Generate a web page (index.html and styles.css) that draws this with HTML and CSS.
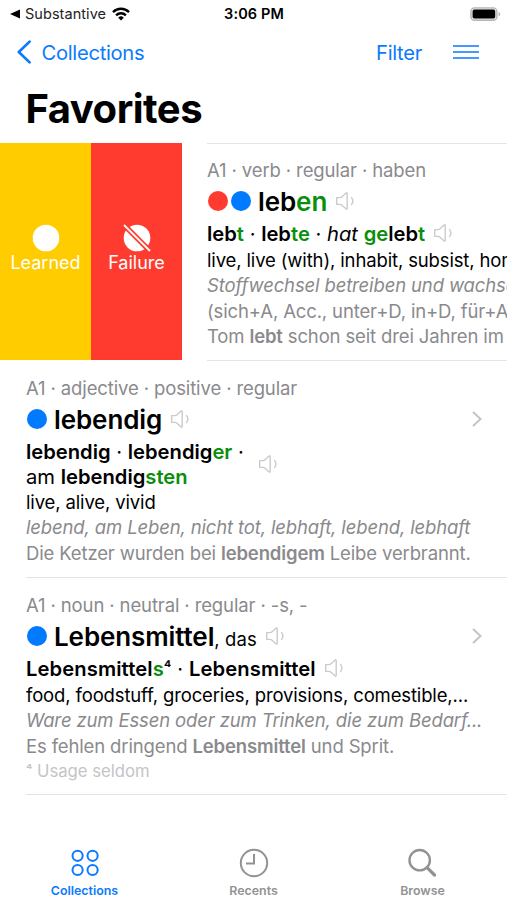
FILE: index.html
```html
<!DOCTYPE html>
<html lang="en">
  <head>
    <meta charset="UTF-8" />
    <meta name="viewport" content="width=device-width, initial-scale=1.0" />
    <title>Favorites</title>
    <link rel="stylesheet" href="styles.css">
  </head>
  <body>
    <!-- shared icons -->
    <svg width="0" height="0" class="defs">
      <symbol id="speaker" viewBox="0 0 20 20">
        <path d="M1.7 6.6h3.6q.8 0 1.4-.6l4.2-3.8q1.3-1 1.3.5v14.6q0 1.5-1.3.5l-4.2-3.8q-.6-.6-1.4-.6H1.7z M16.6 6.6c1.7 2.2 1.7 4.6 0 6.8" fill="none" stroke="#cbcbcd" stroke-width="1.4" stroke-linejoin="round" stroke-linecap="round" />
      </symbol>
      <symbol id="chevron" viewBox="0 0 10 16">
        <path d="M1 1l7.6 7L1 15" fill="none" stroke="#c4c4c7" stroke-width="2" />
      </symbol>
    </svg>
    <div class="app">
      <div class="status">
        <div class="status-left">
          <svg width="10" height="10" viewBox="0 0 10 10"><path d="M10 .6v8.8L0 5z" /></svg>
          <span class="back-app">Substantive</span>
          <svg class="wifi" width="18" height="14" viewBox="0 0 18 14">
            <path d="M1 5.1a11.4 11.4 0 0 1 16 0M4.1 8.3a7 7 0 0 1 9.8 0" fill="none" stroke="#000" stroke-width="2.4" />
            <path d="M9 13.4L6.2 10.7a4 4 0 0 1 5.6 0z" />
          </svg>
        </div>
        <span class="time">3:06 PM</span>
        <svg class="battery" width="31" height="14" viewBox="0 0 31 14">
          <rect x=".9" y=".9" width="26" height="12.4" rx="3.6" fill="#e4e4e4" stroke="#b5b5b5" stroke-width="1.4" />
          <rect x="2.6" y="2.6" width="22.6" height="9" rx="1.8" />
          <path d="M28.6 4.8c2.2.9 2.2 3.7 0 4.6z" fill="#b5b5b5" />
        </svg>
      </div>
      <div class="nav">
        <svg width="14" height="24" viewBox="0 0 14 24"><path d="M12.6 1.6L1.8 12l10.8 10.4" fill="none" stroke="#0a7aff" stroke-width="2.7" stroke-linecap="round" stroke-linejoin="round" /></svg>
        <span class="nav-back">Collections</span>
        <span class="nav-filter">Filter</span>
        <svg width="26" height="16" viewBox="0 0 26 16"><path d="M0 2h26M0 8h26M0 14h26" stroke="#0a7aff" stroke-width="1.6" /></svg>
      </div>
      <h1>Favorites</h1>

      <div class="list">
        <div class="row swiped">
          <div class="action learned">
            <svg width="28" height="28" viewBox="0 0 28 28"><circle cx="14" cy="14" r="13.3" fill="#fff" /></svg>
            <span>Learned</span>
          </div>
          <div class="action failure">
            <svg width="28" height="28" viewBox="0 0 28 28">
              <circle cx="14" cy="14" r="13.3" fill="#fff" />
              <path d="M1 1l26 26" stroke="#ff3b30" stroke-width="5.4" />
              <path d="M1 1l26 26" stroke="#fff" stroke-width="1.8" />
            </svg>
            <span>Failure</span>
          </div>
          <div class="entry">
            <div class="meta">A1 · verb · regular · haben</div>
            <div class="head">
              <i class="dot red"></i><i class="dot"></i>
              <span class="word">leb<em>en</em></span>
              <svg class="speaker"><use href="#speaker" /></svg>
            </div>
            <div class="forms">
              <span><b>leb<em>t</em></b> · <b>leb<em>te</em></b> · <i>hat</i> <b><em>ge</em>leb<em>t</em></b></span>
              <svg class="speaker"><use href="#speaker" /></svg>
            </div>
            <div class="line">live, live (with), inhabit, subsist, hom</div>
            <div class="line gray italic">Stoffwechsel betreiben und wachse</div>
            <div class="line gray">(sich+A, Acc., unter+D, in+D, für+A</div>
            <div class="line gray">Tom <b>lebt</b> schon seit drei Jahren im</div>
          </div>
        </div>

        <div class="row">
          <div class="entry">
            <div class="meta">A1 · adjective · positive · regular</div>
            <div class="head">
              <i class="dot"></i>
              <span class="word">lebendig</span>
              <svg class="speaker"><use href="#speaker" /></svg>
              <svg class="chevron"><use href="#chevron" /></svg>
            </div>
            <div class="forms two">
              <span><b>lebendig</b> · <b>lebendig<em>er</em></b> ·<br>am <b>lebendig<em>sten</em></b></span>
              <svg class="speaker"><use href="#speaker" /></svg>
            </div>
            <div class="line">live, alive, vivid</div>
            <div class="line gray italic">lebend, am Leben, nicht tot, lebhaft, lebend, lebhaft</div>
            <div class="line gray">Die Ketzer wurden bei <b>lebendigem</b> Leibe verbrannt.</div>
          </div>
        </div>

        <div class="row">
          <div class="entry">
            <div class="meta">A1 · noun · neutral · regular · -s, -</div>
            <div class="head">
              <i class="dot"></i>
              <span class="word">Lebensmittel<small>, das</small></span>
              <svg class="speaker"><use href="#speaker" /></svg>
              <svg class="chevron"><use href="#chevron" /></svg>
            </div>
            <div class="forms noun">
              <span><b>Lebensmittel<em>s</em></b><span class="mark">⁴</span> · <b>Lebensmittel</b></span>
              <svg class="speaker"><use href="#speaker" /></svg>
            </div>
            <div class="line">food, foodstuff, groceries, provisions, comestible,...</div>
            <div class="line gray italic">Ware zum Essen oder zum Trinken, die zum Bedarf...</div>
            <div class="line gray">Es fehlen dringend <b>Lebensmittel</b> und Sprit.</div>
            <div class="note"><span class="mark">⁴</span> Usage seldom</div>
          </div>
        </div>
      </div>

      <div class="tabs">
        <div class="tab active">
          <svg width="30" height="30" viewBox="0 0 30 30" fill="none" stroke="currentColor" stroke-width="2">
            <circle cx="7.6" cy="7.8" r="5.1" /><circle cx="22.6" cy="7.8" r="5.1" />
            <circle cx="7.6" cy="22" r="5.1" /><circle cx="22.6" cy="22" r="5.1" />
          </svg>
          <span>Collections</span>
        </div>
        <div class="tab">
          <svg width="30" height="30" viewBox="0 0 30 30" fill="none" stroke="currentColor" stroke-width="2">
            <circle cx="15" cy="15" r="13.2" />
            <path d="M15 6v9.6H7" />
          </svg>
          <span>Recents</span>
        </div>
        <div class="tab">
          <svg width="30" height="30" viewBox="0 0 30 30" fill="none" stroke="currentColor">
            <circle cx="11.7" cy="12.2" r="10.2" stroke-width="2.4" />
            <path d="M19.1 19.6l7.4 7.4" stroke-width="3.2" stroke-linecap="round" />
          </svg>
          <span>Browse</span>
        </div>
      </div>
    </div>
  </body>
</html>
```

FILE: styles.css
```css
* {
  box-sizing: border-box;
}
body {
  margin: 0;
  background: #fff;
  color: #000;
  font-family: Inter, 'Liberation Sans', sans-serif;
}
svg {
  display: block;
  flex-shrink: 0;
}
.defs {
  position: absolute;
}
.app {
  display: flex;
  flex-direction: column;
  width: 507px;
  height: 900px;
  overflow: hidden;
}
/* status bar */
.status {
  display: grid;
  grid-template-columns: 1fr auto 1fr;
  align-items: center;
  height: 27px;
  padding: 0 6px 0 10px;
  font-size: 14.5px;
}
.status-left {
  display: flex;
  align-items: center;
}
.back-app {
  margin: 0 6px 0 5px;
  color: #222;
  letter-spacing: 0.05px;
}
.time {
  margin-left: -3px;
  font-weight: 600;
  letter-spacing: 0.1px;
}
.battery {
  justify-self: end;
}
/* navigation */
.nav {
  display: flex;
  align-items: center;
  height: 50px;
  padding: 0 28px 0 17px;
  color: #0a7aff;
  font-size: 20.2px;
  letter-spacing: -0.3px;
}
.nav-back {
  flex: 1;
  margin-left: 10.5px;
}
.nav-filter {
  margin-right: 31px;
}
h1 {
  height: 66px;
  margin: 0;
  padding-left: 25.5px;
  font-size: 40px;
  line-height: 64px;
  letter-spacing: -0.5px;
}
/* entries */
.row {
  display: flex;
  height: 217px;
  padding-left: 26px;
}
.swiped {
  height: 218px;
  padding-left: 0;
}
.action {
  display: flex;
  flex-direction: column;
  align-items: center;
  flex: 0 0 91px;
  height: 217px;
  padding-top: 81px;
  color: #fff;
  font-size: 18px;
  line-height: 22px;
}
.learned {
  background: #fc0;
}
.failure {
  background: #ff3b30;
}
.entry {
  flex: 1;
  min-width: 0;
  padding-top: 15px;
  border-bottom: 1px solid #e4e4e6;
  white-space: nowrap;
  overflow: hidden;
}
.swiped .entry {
  margin-left: 25px;
  padding-top: 14px;
  border-top: 1px solid #e4e4e6;
}
.meta {
  height: 26px;
  color: #8a8a8d;
  font-size: 18.5px;
  line-height: 25px;
  letter-spacing: -0.12px;
}
.head {
  display: flex;
  align-items: center;
  height: 34px;
}
.dot {
  width: 20px;
  height: 20px;
  margin: 0 1px;
  border-radius: 50%;
  background: #007aff;
}
.red {
  background: #ff3b30;
}
.dot + .dot {
  margin-left: 2px;
}
.word {
  margin-left: 6px;
  font-size: 26px;
  font-weight: 600;
  letter-spacing: -0.1px;
}
.word small {
  font-size: 18.5px;
  font-weight: 400;
  letter-spacing: 0.1px;
}
.word em,
.forms em {
  color: #0a8f0a;
  font-style: normal;
}
.speaker {
  width: 20px;
  height: 20px;
  margin-left: 8px;
}
.chevron {
  width: 10px;
  height: 16px;
  margin-left: auto;
  margin-right: 25px;
}
.forms {
  display: flex;
  align-items: center;
  height: 30px;
  font-size: 20.2px;
  line-height: 25px;
}
.noun {
  letter-spacing: 0.1px;
}
.two {
  height: 54px;
  padding-top: 1px;
}
.two .speaker {
  margin-left: 14px;
}
b {
  font-weight: 600;
}
.mark {
  font-size: 0.8em;
  font-weight: 500;
  line-height: 1;
  vertical-align: 2px;
}
.line {
  height: 25.3px;
  font-size: 18.5px;
  line-height: 25.3px;
  letter-spacing: -0.14px;
}
.gray {
  color: #8a8a8d;
}
.italic {
  font-style: italic;
}
.note {
  color: #c4c4c7;
  font-size: 16.7px;
  line-height: 24px;
}
/* bottom tabs */
.tabs {
  display: flex;
  padding-top: 53px;
}
.tab {
  display: flex;
  flex: 1;
  flex-direction: column;
  align-items: center;
  color: #929294;
  font-size: 12.4px;
  font-weight: 600;
}
.tab span {
  margin-top: 5px;
}
.active {
  color: #0a7aff;
}
```
